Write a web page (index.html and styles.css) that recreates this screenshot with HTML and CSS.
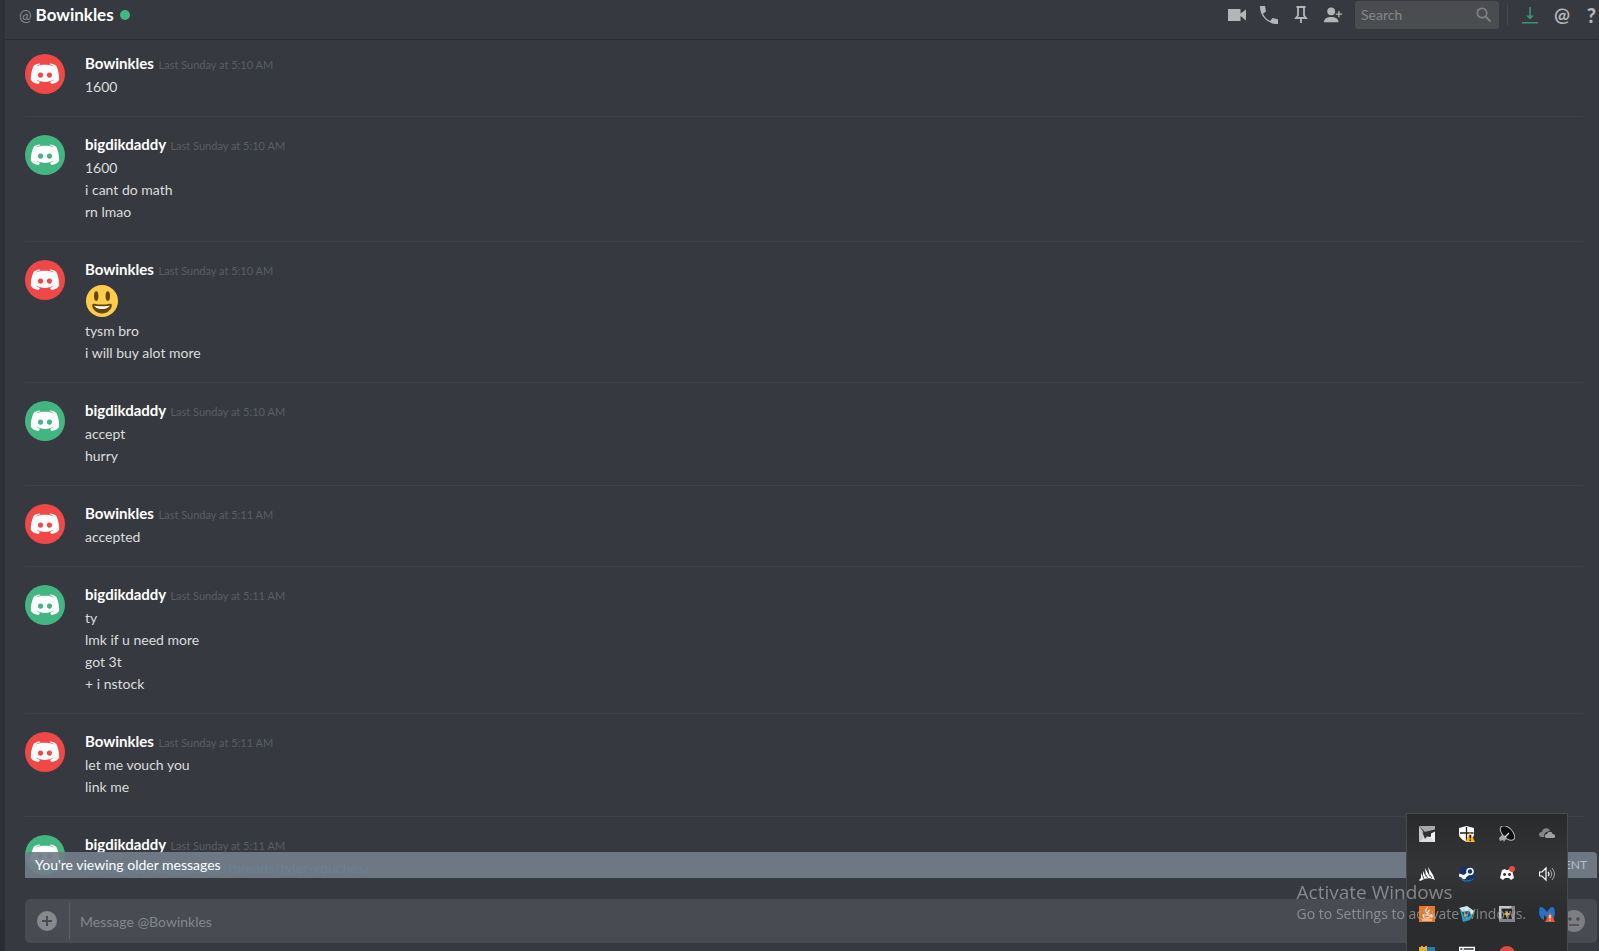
FILE: index.html
```html
<!DOCTYPE html>
<html lang="en">

<head>
	<meta charset="utf-8">
	<title>Bowinkles</title>
	<link rel="stylesheet" href="styles.css">
</head>
<body>
	<svg class="sprite" aria-hidden="true">
		<symbol id="discord" viewBox="0 0 40 40">
			<path fill="currentColor" fill-rule="evenodd" d="M15 9.6C11.800 9.800 9.400 11 8.600 11.900C6.800 15.600 5.800 20 5.800 25.800C7.400 28.400 10.200 29.800 13.600 29.900L15 27.900C13 27.300 12 26.600 11.200 25.600C16.500 28.700 23.500 28.700 28.800 25.600C28 26.600 27 27.300 25 27.900L26.400 29.900C29.800 29.800 32.600 28.400 34.200 25.800C34.200 20 33.200 15.600 31.400 11.900C29.800 10.700 27.600 9.800 25 9.600L24.500 10.300C26.800 10.900 28.200 11.700 29.400 12.700C24 10.200 16 10.200 10.600 12.700C11.800 11.700 13.200 10.900 15.500 10.300ZM15.600 18.500A2.600 2.600 0 1 1 15.500 18.500ZM24.500 18.500A2.600 2.600 0 1 1 24.400 18.500Z"/>
		</symbol>
	</svg>

	<div class="app">
		<div class="sidebar"><div class="sidebar-user"></div></div>
		<main class="chat">
			<header class="header">
				<span class="at">@</span>
				<h1>Bowinkles</h1>
				<span class="status"></span>
				<div class="toolbar">
					<button class="icon" aria-label="Start Video Call"><svg width="20" height="20" viewBox="0 0 20 20"><path fill="currentColor" d="M1 4h12.500v4.500L19 4.500v11l-5.500-4.500V16H1z"/></svg></button>
					<button class="icon" aria-label="Start Voice Call"><svg width="20" height="20" viewBox="0 0 20 20"><path fill="currentColor" d="M1 1h5l1 5.500-3 2.300a14 14 0 0 0 7.200 7.200l2.300-3 5.500 1.200V19C9 19.500.500 11 1 1z"/></svg></button>
					<button class="icon" aria-label="Pinned Messages"><svg width="20" height="20" viewBox="0 0 20 20"><path fill="none" stroke="currentColor" stroke-width="1.800" d="M5.500 2h9M7 2v8.500L5 13h10l-2-2.500V2M10 13v5"/></svg></button>
					<button class="icon" aria-label="Add Friends to DM"><svg width="22" height="20" viewBox="0 0 22 20"><circle cx="9" cy="6" r="4.300" fill="currentColor"/><path fill="currentColor" d="M1 18c0-3.800 3.500-5.800 8-5.800s8 2 8 5.800z"/><path stroke="currentColor" stroke-width="1.500" d="M14 9h7M17.500 5.500v7"/></svg></button>
					<div class="search">
						<input type="text" placeholder="Search" aria-label="Search">
						<svg width="16" height="16" viewBox="0 0 16 16"><circle cx="6" cy="6" r="4.700" fill="none" stroke="currentColor" stroke-width="1.700"/><path stroke="currentColor" stroke-width="2" d="M9.500 9.500l5 5"/></svg>
					</div>
					<span class="divider"></span>
					<button class="icon update" aria-label="Update Ready"><svg width="18" height="20" viewBox="0 0 18 20"><path fill="currentColor" d="M8.300 2h1.600v8.500H13L9 14.500 5 10.500h3.300zM1 17h16v1.500H1z"/></svg></button>
					<button class="icon mentions" aria-label="Mentions">@</button>
					<button class="icon help" aria-label="Help">?</button>
				</div>
			</header>

			<section class="messages">
				<article class="group">
					<svg class="avatar red"><use href="#discord"/></svg>
					<div class="content">
						<h2>Bowinkles <time>Last Sunday at 5:10 AM</time></h2>
						<p>1600</p>
					</div>
				</article>
				<article class="group">
					<svg class="avatar green"><use href="#discord"/></svg>
					<div class="content">
						<h2>bigdikdaddy <time>Last Sunday at 5:10 AM</time></h2>
						<p>1600</p>
						<p>i cant do math</p>
						<p>rn lmao</p>
					</div>
				</article>
				<article class="group">
					<svg class="avatar red"><use href="#discord"/></svg>
					<div class="content">
						<h2>Bowinkles <time>Last Sunday at 5:10 AM</time></h2>
						<svg class="emoji" viewBox="0 0 36 36" role="img" aria-label="smiley"><circle cx="18" cy="18" r="18" fill="#ffcc4d"/><ellipse cx="11.500" cy="12.500" rx="2.500" ry="5.500" fill="#664500"/><ellipse cx="24.500" cy="12.500" rx="2.500" ry="5.500" fill="#664500"/><path fill="#664500" d="M18 22c-3.600 0-6-.400-9-1-.700-.100-2 0-2 2 0 4 4.600 9 11 9s11-5 11-9c0-2-1.300-2.100-2-2-3 .600-5.400 1-9 1z"/><path fill="#fff" d="M9 23s3 1 9 1 9-1 9-1-2 4-9 4-9-4-9-4z"/></svg>
						<p>tysm bro</p>
						<p>i will buy alot more</p>
					</div>
				</article>
				<article class="group">
					<svg class="avatar green"><use href="#discord"/></svg>
					<div class="content">
						<h2>bigdikdaddy <time>Last Sunday at 5:10 AM</time></h2>
						<p>accept</p>
						<p>hurry</p>
					</div>
				</article>
				<article class="group">
					<svg class="avatar red"><use href="#discord"/></svg>
					<div class="content">
						<h2>Bowinkles <time>Last Sunday at 5:11 AM</time></h2>
						<p>accepted</p>
					</div>
				</article>
				<article class="group">
					<svg class="avatar green"><use href="#discord"/></svg>
					<div class="content">
						<h2>bigdikdaddy <time>Last Sunday at 5:11 AM</time></h2>
						<p>ty</p>
						<p>lmk if u need more</p>
						<p>got 3t</p>
						<p>+ i nstock</p>
					</div>
				</article>
				<article class="group">
					<svg class="avatar red"><use href="#discord"/></svg>
					<div class="content">
						<h2>Bowinkles <time>Last Sunday at 5:11 AM</time></h2>
						<p>let me vouch you</p>
						<p>link me</p>
					</div>
				</article>
				<article class="group">
					<svg class="avatar green"><use href="#discord"/></svg>
					<div class="content">
						<h2>bigdikdaddy <time>Last Sunday at 5:11 AM</time></h2>
						<p><a href="#">https://www.sythe.org/threads/tyler-vouches/</a></p>
					</div>
				</article>
			</section>

			<div class="bottom">
				<div class="older">
					<span>You're viewing older messages</span>
					<button>JUMP TO PRESENT</button>
				</div>
				<form class="composer">
					<button type="button" class="attach" aria-label="Upload a file"><svg width="20" height="20" viewBox="0 0 20 20"><circle cx="10" cy="10" r="10" fill="#86888c"/><path stroke="#484b52" stroke-width="2" d="M5 10h10M10 5v10"/></svg></button>
					<input type="text" placeholder="Message @Bowinkles" aria-label="Message @Bowinkles">
					<button type="button" class="face" aria-label="Select emoji"><svg width="22" height="22" viewBox="0 0 22 22"><circle cx="11" cy="11" r="11" fill="#7c7e82"/><circle cx="7" cy="9" r="1.800" fill="#484b52"/><circle cx="15" cy="9" r="1.800" fill="#484b52"/><path stroke="#484b52" stroke-width="1.500" d="M6 15h10"/></svg></button>
				</form>
			</div>
		</main>
	</div>

	<!-- system tray popup -->
	<div class="tray">
		<svg viewBox="0 0 16 16"><path fill="#a8a8a8" d="M0 0h16v5L6 6z"/><path fill="#c4c4c4" d="M0 0l5 7 1 4-6 5z"/><path fill="#dedede" d="M0 16l6-6 5 1 5-5v10z"/><path fill="#f2f2f2" d="M11 7l5-2v11l-5-5z"/><path fill="#303030" d="M3.500 6.500L16 3.500v2l-4 2v3.500L9 9l-3 4z"/></svg>
		<svg viewBox="0 0 16 16"><path fill="#fff" d="M7.500 0L15 2v6c0 4-4 6.500-7.500 8C4 14 0 12 0 8V2z"/><path stroke="#222" stroke-width="1.300" d="M7.500 1v14M1 7h13.500"/><path fill="#fcb913" d="M11 6l5 10H6.500z"/><path stroke="#111" stroke-width="1.500" d="M11.300 9v3.500M11.300 13.500V15"/></svg>
		<svg viewBox="0 0 16 16"><ellipse cx="8.500" cy="7" rx="9" ry="5" transform="rotate(46 8.500 7)" fill="#101010" stroke="#b9b9b9"/><path fill="#a8a8a8" d="M0 12l3-3 4 1 1 3-2 1-1 2-1-2-3 1z"/><path fill="none" stroke="#ddd" stroke-width="1.200" d="M6 11l4-4"/></svg>
		<svg viewBox="0 0 16 16"><path fill="#858585" d="M2 11C-1 10-.500 6 3 6c.500-4 6-5 8-1.500L8 6C6 6 5 8 5 11z"/><path fill="#a0a0a0" d="M7 12c-2-1-1.500-4 1-4 1-3 5-3 5.500 0 3 0 3.500 3 1.500 4z"/></svg>

		<svg viewBox="0 0 16 16"><path fill="#fff" d="M0 14l2-2V7l2 4V5l3 6-1-9 5 9L9 1l5 8 2 5c-5-3-10-2-15 1z"/><path fill="none" stroke="#292a2b" stroke-width=".8" d="M4 10l1 3M7 9l1.500 3M11 9l2 3"/></svg>
		<svg viewBox="0 0 16 16"><circle cx="8" cy="8" r="8" fill="#17346b"/><path fill="#1473a8" d="M1 12c4 3 11 3 14 0-2 5-12 5-14 0z"/><path fill="none" stroke="#fff" stroke-width="3" d="M0 9l5 2 5-4"/><circle cx="11" cy="5.500" r="3" fill="#17346b" stroke="#fff" stroke-width="1.500"/><circle cx="5" cy="11" r="2.300" fill="#fff"/></svg>
		<svg viewBox="0 0 16 16"><path fill="#fff" fill-rule="evenodd" d="M3 4l3-1 1 1h2l1-1 3 1 2 8-3 2-2-2H6l-2 2-3-2zM5.500 7a1.500 1.500 0 1 0 .1 0zM10.500 7a1.500 1.500 0 1 0 .1 0z"/><circle cx="13" cy="3" r="3" fill="#f04747"/></svg>
		<svg viewBox="0 0 16 16"><path fill="none" stroke="#fff" stroke-width="1.200" d="M.500 6H3l4-4v12l-4-4H.500zM9 6q2 2 0 4"/><path fill="none" stroke="#a5a5a5" d="M11 4q3.500 4 0 8M13 2q5 6 0 12"/></svg>

		<svg viewBox="0 0 16 16"><path fill="#e77725" d="M0 0h16v16H0z"/><path fill="none" stroke="#fff" stroke-width="1.100" d="M9 1q-4 3-1 6M11 4Q8 5 9 8M4 9h7l-1 3H5zM11 9h2v2h-2M3 14h10"/></svg>
		<svg viewBox="0 0 16 16"><path fill="#2f9cc0" d="M1 4L8 0l7 5-4 9-7 2z"/><path fill="#d6e8ed" d="M0 2l8-2 7 5-2 4-3-4-6 1z"/><path fill="#155a76" d="M3 6l7-1 2 4-6 4z"/><path fill="#d29a46" d="M5 7l4 2-4 2z"/></svg>
		<svg viewBox="0 0 16 16"><path fill="#858585" d="M0 0h16v16H0z"/><path fill="#c7c7c7" d="M0 0h13l-2 2H2v10l-2 2z"/><path fill="#252525" d="M3 3h10v10H3z"/><path fill="#f3c32d" d="M8 4l1 3 3 1-3 1-1 3-1-3-3-1 3-1z"/></svg>
		<svg viewBox="0 0 16 16"><path fill="#2871c6" d="M1 1c3 0 5 2 7 5 2-3 3-5 6-5 3 3 2 9 0 13l-3-5-3 3-3-3v5C0 12-1 6 1 1z"/><path fill="#f15a24" d="M11 6l5 10H6z"/><path stroke="#fff" stroke-width="1.400" d="M11 9v3.500M11 13.500V15"/></svg>

		<svg viewBox="0 0 16 16"><path fill="#e6ae38" d="M0 1h2V0h2v1h2V0h2v16H0z"/><path fill="#277ea5" d="M8 1h8v15H8z"/></svg>
		<svg viewBox="0 0 16 16"><path fill="none" stroke="#fff" stroke-width="1.400" d="M.700 1.500h14.600v13H.700zM1 4.500h14M4 1v3"/></svg>
		<svg viewBox="0 0 16 16"><circle cx="8" cy="8" r="8" fill="#db4b3f"/></svg>
	</div>

	<div class="watermark">
		<strong>Activate Windows</strong>
		<span>Go to Settings to activate Windows.</span>
	</div>
</body>

</html>
```
FILE: styles.css
```css
* {
	box-sizing: border-box;
}

body {
	margin: 0;
	overflow: hidden;
	background-color: #36393f;
	color: #dcddde;
	font-family: Lato, "Liberation Sans", sans-serif;
	font-size: 14px;
}

h1, h2, p {
	margin: 0;
}

button, input {
	border: none;
	padding: 0;
	background: none;
	color: inherit;
	font: inherit;
}

.sprite {
	position: absolute;
	width: 0;
	height: 0;
}

.app {
	display: flex;
	height: 100vh;
}

.sidebar {
	display: flex;
	flex-direction: column;
	justify-content: flex-end;
	width: 5px;
	background-color: #2f3136;
}

.sidebar-user {
	height: 31px;
	background-color: #2a2c31;
}

.chat {
	display: flex;
	flex: 1;
	flex-direction: column;
	min-width: 0;
}

/* header */
.header {
	display: flex;
	flex: none;
	align-items: center;
	height: 40px;
	padding: 0 0 10px 14px;
	border-bottom: 1px solid #2b2d32;
	overflow: hidden;
}

.at {
	color: #8a8c90;
	font-size: 15px;
}

.header h1 {
	margin-left: 4px;
	color: #fff;
	font-size: 17px;
	font-weight: 700;
}

.status {
	width: 10px;
	height: 10px;
	margin-left: 6px;
	border-radius: 50%;
	background-color: #43b581;
}

.toolbar {
	display: flex;
	flex: none;
	align-items: center;
	gap: 12px;
	margin-left: auto;
	color: #b4b5b7;
}

.icon {
	display: flex;
	align-items: center;
	justify-content: center;
	width: 20px;
	height: 20px;
}

.update {
	color: #3b9470;
}

.mentions {
	font-size: 19px;
	font-weight: 700;
}

.help {
	width: 15px;
	font-size: 20px;
	font-weight: 900;
}

.search {
	display: flex;
	align-items: center;
	width: 144px;
	height: 28px;
	margin-right: -4px;
	padding: 0 7px 0 6px;
	border-radius: 3px;
	background-color: #4b4c50;
	color: #7f8084;
}

.search input {
	flex: 1;
	min-width: 0;
}

.search input::placeholder, .composer input::placeholder {
	color: #85878b;
	opacity: 1;
}

.divider {
	width: 1px;
	height: 22px;
	background-color: #45484e;
}

/* messages */
.messages {
	flex: 1;
	min-height: 0;
	padding: 14px 16px 0 20px;
	overflow: hidden;
}

.group {
	display: flex;
	gap: 20px;
	margin-bottom: 18px;
	padding-bottom: 18px;
	border-bottom: 1px solid #3e4147;
}

.avatar {
	flex: none;
	width: 40px;
	height: 40px;
	border-radius: 50%;
	color: #fff;
}

.red {
	background-color: #f04747;
}

.green {
	background-color: #43b581;
}

.content {
	line-height: 22px;
}

.content h2 {
	height: 22px;
	color: #fff;
	font-size: 15px;
	font-weight: 700;
	line-height: 18px;
}

.content time {
	margin-left: 1px;
	color: #5b5e63;
	font-size: 11px;
	font-weight: 400;
}

.content a {
	color: #0096cf;
	text-decoration: none;
}

.emoji {
	display: block;
	width: 32px;
	height: 32px;
	margin: 3px 1px;
}

/* bar over the last message, and the text box */
.bottom {
	position: relative;
	flex: none;
	padding: 21px 2px 8px 20px;
}

.older {
	position: absolute;
	right: 2px;
	bottom: 100%;
	left: 20px;
	display: flex;
	align-items: center;
	justify-content: space-between;
	height: 26px;
	padding: 0 10px 2px;
	border-radius: 4px 4px 0 0;
	background-color: rgba(114, 126, 138, 0.92);
	color: #fff;
}

.older button {
	color: #b9bfc5;
	font-size: 12px;
}

.composer {
	display: flex;
	align-items: center;
	height: 44px;
	padding: 4px 12px;
	border-radius: 5px;
	background-color: #484b52;
}

.attach {
	display: flex;
	align-items: center;
	height: 36px;
	padding-right: 12px;
	border-right: 1px solid #5e6167;
}

.composer input {
	flex: 1;
	min-width: 0;
	margin-left: 10px;
}

.face {
	display: flex;
}

/* desktop overlays */
.tray {
	position: fixed;
	right: 31px;
	bottom: 0;
	display: grid;
	grid-template-columns: repeat(4, 16px);
	grid-auto-rows: 16px;
	gap: 24px;
	width: 162px;
	height: 138px;
	padding: 12px;
	border: 1px solid #494a4b;
	border-bottom: none;
	background: linear-gradient(#292a2b, #333536 40%, #2b2c2d 75%);
	overflow: hidden;
}

.tray svg {
	width: 16px;
	height: 16px;
}

.watermark {
	position: fixed;
	right: 73px;
	bottom: 26px;
	display: flex;
	flex-direction: column;
	color: rgba(170, 171, 173, 0.7);
	font-family: "Open Sans", "Noto Sans", sans-serif;
	font-size: 14px;
	line-height: 22px;
}

.watermark strong {
	font-size: 19px;
	font-weight: 400;
}
```
